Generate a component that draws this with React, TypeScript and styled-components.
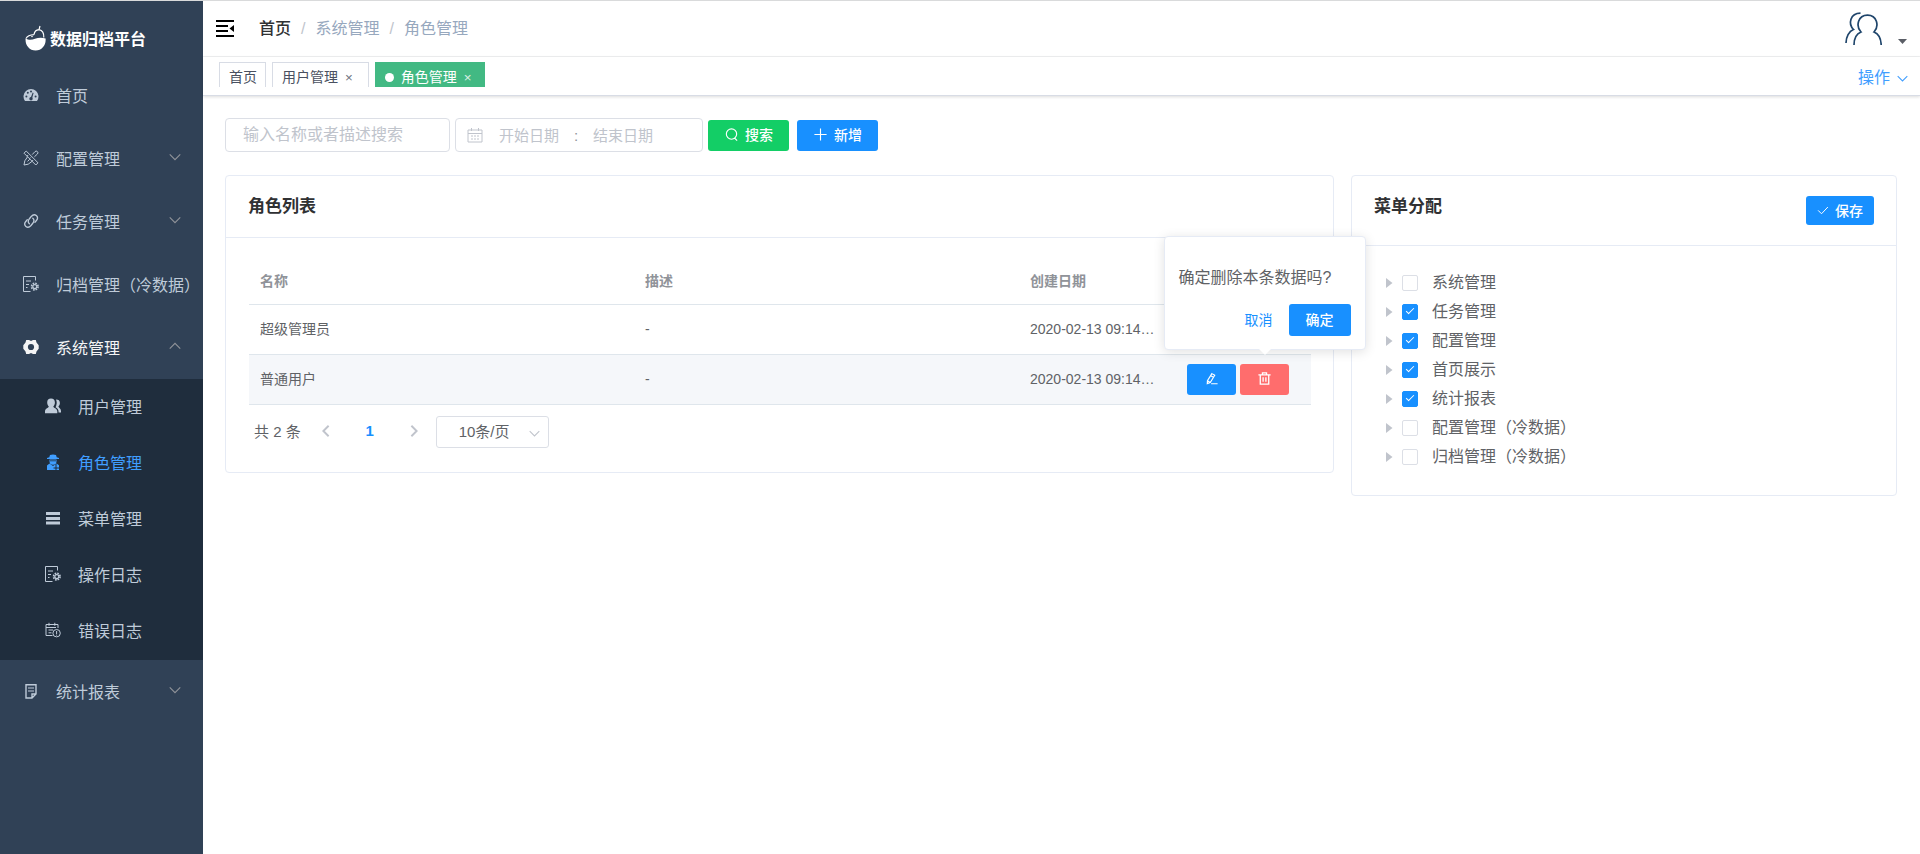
import React, { useState } from 'react';
import styled, { createGlobalStyle, css } from 'styled-components';

const GlobalStyle = createGlobalStyle`
  *, *::before, *::after { box-sizing: border-box; }
  body {
    margin: 0;
    background: #fff;
    color: #606266;
    font-family: "Liberation Sans", "Noto Sans CJK SC", sans-serif;
    font-size: 16px;
  }
  button, input, select { font-family: inherit; }
  button { cursor: pointer; }
  svg { display: block; flex: none; }
`;

/* ---------- layout ---------- */

const Page = styled.div`
  display: flex;
  min-height: 100vh;
  border-top: 1px solid #d9dadb;
`;

const Sidebar = styled.nav`
  flex: none;
  width: 203px;
  background: #304156;
`;

const Brand = styled.a`
  display: flex;
  align-items: center;
  gap: 4px;
  height: 63px;
  padding: 10px 0 0 25px;
  color: #fff;
  font-size: 16px;
  font-weight: 700;
  text-decoration: none;
`;

const MenuList = styled.ul`
  list-style: none;
  margin: 0;
  padding: 0;
`;

const SubMenu = styled(MenuList)`
  background: #1f2d3d;
  padding-bottom: 1px;
`;

const MenuLink = styled.a<{ $sub?: boolean; $tone?: 'open' | 'active' }>`
  display: flex;
  align-items: center;
  height: ${p => (p.$sub ? 56 : 63)}px;
  padding: ${p => (p.$sub ? '0 22px 2px 45px' : '0 22px 2px 23px')};
  color: ${p => (p.$tone === 'active' ? '#409eff' : p.$tone === 'open' ? '#f4f4f5' : '#bfcbd9')};
  font-size: 16px;
  white-space: nowrap;
  text-decoration: none;
`;

const MenuIcon = styled.span`
  flex: none;
  width: 33px;
`;

const MenuArrow = styled.span`
  margin-left: auto;
  padding-bottom: 2px;
  color: #909399;
`;

const Main = styled.div`
  flex: 1;
  min-width: 0;
`;

const Navbar = styled.header`
  display: flex;
  align-items: center;
  height: 56px;
  padding: 0 13px;
  border-bottom: 1px solid #f0f1f2;
`;

const IconButton = styled.button`
  display: flex;
  padding: 0;
  border: 0;
  background: none;
  color: #000;
`;

const Breadcrumb = styled.ol`
  display: flex;
  gap: 10px;
  list-style: none;
  margin: 0 auto 0 25px;
  padding: 0;
  font-size: 16px;
  line-height: 20px;
  color: #97a8be;
`;

const Crumb = styled.li`
  display: flex;
  gap: 10px;
  & + &::before {
    content: '/';
    color: #c0c4cc;
  }
`;

const HomeLink = styled.a`
  color: #303133;
  font-weight: 500;
  text-decoration: none;
`;

const UserButton = styled(IconButton)`
  align-items: flex-end;
  gap: 16px;
  color: #1f456b;
`;

const TagBar = styled.div`
  display: flex;
  align-items: flex-start;
  gap: 6px;
  height: 39px;
  padding: 5px 12px 0 16px;
  border-bottom: 1px solid #d8dce5;
  box-shadow: 0 1px 3px rgba(0, 0, 0, 0.14);
`;

const Tag = styled.div<{ $active?: boolean }>`
  display: flex;
  align-items: center;
  gap: 7px;
  height: 25px;
  padding: 4px ${p => (p.$active ? 5 : 8)}px 0 9px;
  border: 1px solid ${p => (p.$active ? '#42b983' : '#d8dce5')};
  border-bottom: 0;
  background: ${p => (p.$active ? '#42b983' : '#fff')};
  color: ${p => (p.$active ? '#fff' : '#495060')};
  font-size: 14px;
  line-height: 20px;
`;

const TagDot = styled.span`
  width: 9px;
  height: 9px;
  border-radius: 50%;
  background: #fff;
`;

const TagClose = styled.button`
  padding: 0 7px 0 0;
  border: 0;
  background: none;
  color: inherit;
  opacity: 0.8;
`;

const Operations = styled.button`
  display: flex;
  align-items: center;
  gap: 7px;
  margin-left: auto;
  padding: 6px 0 0;
  border: 0;
  background: none;
  color: #409eff;
  font-size: 16px;
  line-height: 20px;
`;

const Content = styled.main`
  padding: 22px 23px 22px 22px;
`;

/* ---------- filters ---------- */

const Filters = styled.form`
  display: flex;
  align-items: center;
  margin-bottom: 23px;
`;

const fieldBox = css`
  height: 34px;
  border: 1px solid #dcdfe6;
  border-radius: 4px;
  background: #fff;
`;

const SearchInput = styled.input`
  ${fieldBox}
  width: 225px;
  margin-right: 5px;
  padding: 0 17px;
  color: #606266;
  font-size: 16px;
  &::placeholder { color: #c0c4cc; }
`;

const DateRange = styled.div`
  ${fieldBox}
  display: flex;
  align-items: center;
  width: 248px;
  margin-right: 5px;
  padding: 0 11px;
  color: #c0c4cc;
  font-size: 15px;
`;

const DateInput = styled.input`
  width: 60px;
  padding: 0;
  border: 0;
  background: none;
  color: #606266;
  font-size: 15px;
  &::placeholder { color: #c0c4cc; }
  &:first-of-type { margin-left: 16px; }
`;

const DateSeparator = styled.span`
  width: 34px;
  color: #909399;
  text-align: center;
`;

const Button = styled.button<{ $color: string; $height?: number; $pad?: number }>`
  display: inline-flex;
  align-items: center;
  justify-content: center;
  gap: 6px;
  height: ${p => p.$height ?? 31}px;
  padding: 0 ${p => p.$pad ?? 16}px 2px;
  border: 0;
  border-radius: 3px;
  background: ${p => p.$color};
  color: #fff;
  font-size: 14px;
  font-weight: 500;
`;

const SearchButton = styled(Button)`
  margin-right: 8px;
`;

/* ---------- cards ---------- */

const Columns = styled.div`
  display: grid;
  grid-template-columns: repeat(3, minmax(0, 1fr));
  align-items: start;
  gap: 17px;
`;

const Card = styled.section<{ $span?: number }>`
  grid-column: span ${p => p.$span ?? 1};
  border: 1px solid #e6ebf5;
  border-radius: 4px;
`;

const CardHeader = styled.div`
  display: flex;
  align-items: flex-start;
  justify-content: space-between;
  padding: 20px 22px;
  border-bottom: 1px solid #e6ebf5;
`;

const CardTitle = styled.h2`
  margin: 0;
  color: #303133;
  font-size: 17px;
  line-height: 21px;
  font-weight: 700;
`;

const CardBody = styled.div`
  padding: 22px 22px 24px 23px;
`;

/* ---------- table ---------- */

const Table = styled.table`
  width: 100%;
  table-layout: fixed;
  border-collapse: separate;
  border-spacing: 0;
  font-size: 14px;
  line-height: 20px;
`;

const Col = styled.col<{ $fixed?: boolean }>`
  width: ${p => (p.$fixed ? '146px' : 'auto')};
`;

const Th = styled.th`
  height: 45px;
  padding: 0 11px 2px;
  border-bottom: 1px solid #dfe6ec;
  color: #909399;
  font-weight: 700;
  text-align: left;
`;

const Row = styled.tr<{ $hover?: boolean }>`
  background: ${p => (p.$hover ? '#f5f7fa' : '#fff')};
`;

const Td = styled.td`
  height: 50px;
  padding: 0 8px 2px 11px;
  border-bottom: 1px solid #dfe6ec;
`;

const ActionTd = styled(Td)`
  padding-bottom: 0;
`;

const DateText = styled.div`
  overflow: hidden;
  text-overflow: ellipsis;
  white-space: nowrap;
`;

const Actions = styled.div`
  display: flex;
  gap: 4px;
  margin-left: 11px;
`;

const PopAnchor = styled.div`
  position: relative;
`;

const Popconfirm = styled.div`
  position: absolute;
  z-index: 10;
  left: 50%;
  bottom: 45px;
  width: 202px;
  margin-left: -101px;
  padding: 28px 14px 13px;
  border: 1px solid #e6ebf5;
  border-radius: 4px;
  background: #fff;
  box-shadow: 0 2px 12px rgba(0, 0, 0, 0.12);
  font-size: 16px;
  &::after {
    content: '';
    position: absolute;
    left: 50%;
    bottom: -6px;
    margin-left: -6px;
    border: 6px solid transparent;
    border-top-color: #fff;
    border-bottom: 0;
  }
`;

const PopText = styled.p`
  margin: 0 0 14px;
  line-height: 25px;
  white-space: nowrap;
`;

const PopActions = styled.div`
  display: flex;
  justify-content: flex-end;
  gap: 16px;
`;

const TextButton = styled.button`
  padding: 0 0 2px;
  border: 0;
  background: none;
  color: #1890ff;
  font-size: 14px;
`;

/* ---------- pagination ---------- */

const Pagination = styled.div`
  display: flex;
  align-items: center;
  margin-top: 11px;
  padding-left: 5px;
  font-size: 15px;
  color: #606266;
`;

const Total = styled.span`
  padding: 0 3px 3px 0;
`;

const PageArrow = styled.button`
  display: flex;
  justify-content: center;
  width: 44px;
  padding: 0 0 2px;
  border: 0;
  background: none;
  color: #c0c4cc;
`;

const PageNumber = styled.button`
  width: 44px;
  padding: 0 0 3px;
  border: 0;
  background: none;
  color: #1890ff;
  font-size: 15px;
  font-weight: 700;
`;

const SelectBox = styled.div`
  position: relative;
  color: #c0c4cc;
`;

const PageSize = styled.select`
  appearance: none;
  width: 113px;
  height: 32px;
  padding: 0 0 2px 22px;
  border: 1px solid #dcdfe6;
  border-radius: 3px;
  background: #fff;
  color: #606266;
  font-size: 15px;
`;

const SelectArrow = styled.span`
  position: absolute;
  right: 9px;
  top: 12px;
  pointer-events: none;
`;

/* ---------- tree ---------- */

const Tree = styled.ul`
  list-style: none;
  margin: 0;
  padding: 0 0 0 9px;
`;

const TreeItem = styled.li`
  display: flex;
  align-items: center;
  height: 29px;
`;

const TreeCaret = styled.button`
  width: 18px;
  height: 16px;
  padding: 3px 2px;
  border: 0;
  background: none;
  color: #c0c4cc;
`;

const TreeLabel = styled.label`
  display: flex;
  align-items: center;
  gap: 14px;
  font-size: 16px;
  line-height: 20px;
`;

const Checkbox = styled.input`
  appearance: none;
  position: relative;
  width: 16px;
  height: 16px;
  margin: 0;
  border: 1px solid #dcdfe6;
  border-radius: 2px;
  background: #fff;
  &:checked {
    border-color: #1890ff;
    background: #1890ff;
  }
  &:checked::after {
    content: '';
    position: absolute;
    left: 5px;
    top: 1px;
    width: 4px;
    height: 8px;
    border: solid #fff;
    border-width: 0 1px 1px 0;
    transform: rotate(45deg);
  }
`;

/* ---------- icons ---------- */

type IconName = keyof typeof shapes;

const gear = (
  <g fill="none" stroke="currentColor">
    <circle cx="11.8" cy="10.6" r="3.3" strokeWidth="1.6" strokeDasharray="1.6 1" />
    <circle cx="11.8" cy="10.6" r="2" strokeWidth="1.2" />
  </g>
);

const shapes = {
  dashboard: (
    <>
      <path d="M2 14A7.5 7.5 0 1 1 14 14Z" fill="currentColor" />
      <g fill="#304156">
        <circle cx="3.4" cy="9.4" r="1" /><circle cx="4.8" cy="5.8" r="1" /><circle cx="8" cy="4.4" r="1" />
        <circle cx="12.6" cy="9.4" r="1" /><circle cx="8" cy="11.8" r="1.7" />
        <path d="M7.4 11.5 9.7 5.6l.9.3-1.7 6Z" />
      </g>
    </>
  ),
  tools: (
    <g fill="none" stroke="currentColor" strokeWidth="1">
      <path d="M1 3.2 3.2 1 15 12.8 12.8 15Z M4 6.2l1.2-1.2M6.5 8.7l1.2-1.2M9 11.2l1.2-1.2" />
      <path d="M9.2 4.6 12 1.6a1.6 1.6 0 0 1 2.4 2.4L11.4 6.8M6.8 9.2 4.6 11.4M4.6 6.8 1.8 10.8 1 15l4.2-.8L9 11.4" />
    </g>
  ),
  link: (
    <g fill="none" stroke="currentColor" strokeWidth="1.3" strokeLinecap="round">
      <path d="M9.800 5.200C11.300 6.500 11.200 8.300 10 10L8 12.500C6.400 14.300 4.300 14.600 2.900 13.400S1.300 10.300 2.800 8.500L4.300 6.700" />
      <path d="M6.400 10.800C4.900 9.500 5 7.700 6.200 6L8.200 3.500C9.800 1.700 11.900 1.400 13.300 2.600S14.900 5.700 13.400 7.500L11.900 9.300" />
    </g>
  ),
  archive: (
    <g>
      <path d="M7.500 15.500H.5V.5H12.500V4.500M3 5h5M3 8.500h3M3 11.500h1.500" fill="none" stroke="currentColor" />
      {gear}
    </g>
  ),
  setting: (
    <g>
      <path d="M3.200.900H6L8 2 10 .900H12.800L13.500 3.500 15.700 6.200V9.800L13.500 12.500 12.800 15.100H10L8 14 6 15.100H3.200L2.500 12.500.3 9.800V6.200L2.500 3.500Z" fill="currentColor" />
      <circle cx="8" cy="8" r="3.100" fill="#304156" />
    </g>
  ),
  users: (
    <path fill="currentColor" d="M6 .5c2.500 0 3.900 1.600 3.900 4 0 1.700-.7 3-1.600 3.900.2 1.500 4 1.700 4 5.100v1.800H0v-1.800c0-3.400 3.600-3.600 3.800-5.100C2.900 7.500 2.200 6.200 2.200 4.500 2.200 2.100 3.500.5 6 .5Zm5 1c2.600 0 3.900 1.200 3.900 3.400 0 1.500-.6 2.600-1.500 3.400.1 1.300 2.600 2.200 2.600 4.700v1.500h-2.400c0-3-.9-4-3-5.200 1.200-2.800 1.600-5.200.4-7.800Z" />
  ),
  role: (
    <g fill="currentColor">
      <path d="M5 1 8 .6l3 .4.7 2.200 2.300.8v1H2V4l2.300-.8ZM4.500 5.500h7v1.800a3.500 3.500 0 0 1-7 0Z" />
      <path d="M4.500 9.500 8 12l3.500-2.500 2.500 1.700V16H2v-4.500Z" />
      <path d="M11 10v6M8.500 14H14" stroke="#1f2d3d" strokeWidth="1" />
      <path d="M5 6.800h6" stroke="#1f2d3d" strokeWidth=".8" />
    </g>
  ),
  menu: <path d="M1 3.500h14M1 8.500h14M1 13h14" stroke="currentColor" strokeWidth="2.800" />,
  error: (
    <g fill="none" stroke="currentColor">
      <path d="M7.500 13.500H1V2.500H13V6M4 .8v3M9.800.8v3M1 5.500h10M3.500 8H8M3.500 10.800h3" />
      <circle cx="11.600" cy="11.200" r="3.700" /><path d="M11.600 9v3M11.600 12.600v1" />
    </g>
  ),
  report: (
    <g fill="none" stroke="currentColor" strokeWidth="1.400">
      <path d="M9 15H3V1.800H13V11ZM9 15v-4H13" /><path d="M5 5h6M5 8h6" strokeWidth="1.200" />
    </g>
  ),
  calendar: (
    <path d="M1 3h14v12H1ZM4.500 1v3M11.500 1v3M1 6.500h14M4 9h2M7 9h2M10 9h2M4 12h2M7 12h2M10 12h2" fill="none" stroke="currentColor" />
  ),
  search: <path d="M8 2a5.500 5.500 0 1 1 0 11A5.500 5.500 0 0 1 8 2ZM11.500 12l2.500 2.500" fill="none" stroke="currentColor" strokeWidth="1.200" />,
  plus: <path d="M8 1.500v13M1.500 8h13" stroke="currentColor" strokeWidth="1.200" />,
  check: <path d="M1.500 8.500 6 13 14.500 4" fill="none" stroke="currentColor" strokeWidth="1.300" />,
  edit: (
    <path d="M8.500 2 12 4 6.500 13 2.800 14.300 3 10.800ZM7 4.500l3.500 2M3 10.800 6.500 13M7.500 14.500H15.500" fill="none" stroke="currentColor" strokeWidth="1.400" />
  ),
  trash: (
    <path d="M.5 3.500h15M5.500 3V1h5v2M2.800 3.500V15H13.200V3.500M6.300 6.500V12M9.700 6.500V12" fill="none" stroke="currentColor" strokeWidth="1.600" />
  ),
  down: <path d="M1 4.500 8 11.500 15 4.500" fill="none" stroke="currentColor" strokeWidth="1.500" />,
  up: <path d="M1 11.500 8 4.500 15 11.500" fill="none" stroke="currentColor" strokeWidth="1.500" />,
  left: <path d="M11 2 5 8l6 6" fill="none" stroke="currentColor" strokeWidth="2.200" />,
  right: <path d="M5 2l6 6-6 6" fill="none" stroke="currentColor" strokeWidth="2.200" />,
};

const Icon = ({ name, size = 16 }: { name: IconName; size?: number }) => (
  <svg width={size} height={size} viewBox="0 0 16 16" aria-hidden="true">{shapes[name]}</svg>
);

const LogoIcon = () => (
  <svg width="21" height="26" viewBox="0 0 21 26" aria-hidden="true">
    <path d="M.6 13.500C4 15.500 7 15 10 13.800S17 12.300 20.600 13.500C21.200 20 17 25.500 10.600 25.500S0 20 .6 13.500Z" fill="#fff" />
    <path d="M1 13.500C2.500 10.600 5 9.800 9 9.600M9 9.600C9.400 6.500 11.500 4.800 14 4.600L15 1M14 4.600C17.500 5.400 19 8.500 18.800 12.500" fill="none" stroke="#fff" strokeWidth="1.200" />
    <circle cx="7" cy="11.500" r=".8" fill="#fff" />
  </svg>
);

const FoldIcon = () => (
  <svg width="18" height="17" viewBox="0 0 18 17" aria-hidden="true">
    <path d="M0 1H18M0 6H12M0 11H12M0 16H18" stroke="currentColor" strokeWidth="1.800" />
    <path d="M18 5v7L13.500 8.500Z" fill="currentColor" />
  </svg>
);

const AvatarIcon = () => (
  <svg width="37" height="34" viewBox="0 0 37 34" aria-hidden="true">
    <g fill="none" stroke="currentColor" strokeWidth="1.700">
      <path d="M9 33C9 27 11 22 16 20 10.500 14 13 3.200 22.500 3.200S34.500 14 29 20C34 22 36 27 36.200 33" />
      <path d="M1 31C1 25 4 19 8.500 17.500 3 12 5 1.200 15.500 1.200" />
    </g>
  </svg>
);

const Caret = () => (
  <svg width="9" height="7" viewBox="0 0 9 7" aria-hidden="true">
    <path d="M0 0h9L4.500 5Z" fill="#5a5e66" />
  </svg>
);

/* ---------- data ---------- */

type Entry = { label: string; icon: IconName; arrow?: 'down' | 'up'; active?: boolean; children?: Entry[] };

const menu: Entry[] = [
  { label: '首页', icon: 'dashboard' },
  { label: '配置管理', icon: 'tools', arrow: 'down' },
  { label: '任务管理', icon: 'link', arrow: 'down' },
  { label: '归档管理（冷数据）', icon: 'archive' },
  {
    label: '系统管理', icon: 'setting', arrow: 'up',
    children: [
      { label: '用户管理', icon: 'users' },
      { label: '角色管理', icon: 'role', active: true },
      { label: '菜单管理', icon: 'menu' },
      { label: '操作日志', icon: 'archive' },
      { label: '错误日志', icon: 'error' },
    ],
  },
  { label: '统计报表', icon: 'report', arrow: 'down' },
];

const roles = [
  { name: '超级管理员', desc: '-', created: '2020-02-13 09:14:25' },
  { name: '普通用户', desc: '-', created: '2020-02-13 09:14:25' },
];

const permissions: [string, boolean][] = [
  ['系统管理', false],
  ['任务管理', true],
  ['配置管理', true],
  ['首页展示', true],
  ['统计报表', true],
  ['配置管理（冷数据）', false],
  ['归档管理（冷数据）', false],
];

const MenuEntry = ({ entry, sub }: { entry: Entry; sub?: boolean }) => (
  <li>
    <MenuLink href="#" $sub={sub} $tone={entry.active ? 'active' : entry.children ? 'open' : undefined}>
      <MenuIcon><Icon name={entry.icon} /></MenuIcon>
      {entry.label}
      {entry.arrow && <MenuArrow><Icon name={entry.arrow} size={12} /></MenuArrow>}
    </MenuLink>
    {entry.children && (
      <SubMenu>
        {entry.children.map(c => <MenuEntry key={c.label} entry={c} sub />)}
      </SubMenu>
    )}
  </li>
);

export default function App() {
  const [confirming, setConfirming] = useState(true);
  const close = () => setConfirming(false);
  return (
    <>
      <GlobalStyle />
      <Page>
        <Sidebar>
          <Brand href="#"><LogoIcon />数据归档平台</Brand>
          <MenuList>
            {menu.map(e => <MenuEntry key={e.label} entry={e} />)}
          </MenuList>
        </Sidebar>
        <Main>
          <Navbar>
            <IconButton aria-label="收起菜单"><FoldIcon /></IconButton>
            <Breadcrumb>
              <Crumb><HomeLink href="#">首页</HomeLink></Crumb>
              <Crumb>系统管理</Crumb>
              <Crumb>角色管理</Crumb>
            </Breadcrumb>
            <UserButton aria-label="用户"><AvatarIcon /><Caret /></UserButton>
          </Navbar>
          <TagBar>
            <Tag>首页</Tag>
            <Tag>用户管理<TagClose aria-label="关闭用户管理">×</TagClose></Tag>
            <Tag $active><TagDot />角色管理<TagClose aria-label="关闭角色管理">×</TagClose></Tag>
            <Operations>操作<Icon name="down" size={11} /></Operations>
          </TagBar>
          <Content>
            <Filters onSubmit={e => e.preventDefault()}>
              <SearchInput aria-label="名称或描述" placeholder="输入名称或者描述搜索" />
              <DateRange>
                <Icon name="calendar" />
                <DateInput aria-label="开始日期" placeholder="开始日期" />
                <DateSeparator>:</DateSeparator>
                <DateInput aria-label="结束日期" placeholder="结束日期" />
              </DateRange>
              <SearchButton $color="#13ce66"><Icon name="search" size={15} />搜索</SearchButton>
              <Button type="button" $color="#1890ff"><Icon name="plus" size={15} />新增</Button>
            </Filters>
            <Columns>
              <Card $span={2}>
                <CardHeader><CardTitle>角色列表</CardTitle></CardHeader>
                <CardBody>
                  <Table>
                    <colgroup><Col /><Col /><Col $fixed /><Col $fixed /></colgroup>
                    <thead>
                      <tr><Th>名称</Th><Th>描述</Th><Th>创建日期</Th><Th aria-label="操作" /></tr>
                    </thead>
                    <tbody>
                      {roles.map((r, i) => (
                        <Row key={r.name} $hover={i === 1}>
                          <Td>{r.name}</Td>
                          <Td>{r.desc}</Td>
                          <Td><DateText>{r.created}</DateText></Td>
                          <ActionTd>
                            {i === 1 && (
                              <Actions>
                                <Button $color="#1890ff" $pad={18} aria-label="编辑"><Icon name="edit" size={13} /></Button>
                                <PopAnchor>
                                  <Button $color="#ff6d6d" $pad={18} aria-label="删除" onClick={() => setConfirming(true)}>
                                    <Icon name="trash" size={13} />
                                  </Button>
                                  {confirming && (
                                    <Popconfirm role="dialog" aria-label="删除确认">
                                      <PopText>确定删除本条数据吗?</PopText>
                                      <PopActions>
                                        <TextButton onClick={close}>取消</TextButton>
                                        <Button $color="#1890ff" $height={32} $pad={17} onClick={close}>确定</Button>
                                      </PopActions>
                                    </Popconfirm>
                                  )}
                                </PopAnchor>
                              </Actions>
                            )}
                          </ActionTd>
                        </Row>
                      ))}
                    </tbody>
                  </Table>
                  <Pagination>
                    <Total>共 2 条</Total>
                    <PageArrow aria-label="上一页"><Icon name="left" size={14} /></PageArrow>
                    <PageNumber>1</PageNumber>
                    <PageArrow aria-label="下一页"><Icon name="right" size={14} /></PageArrow>
                    <SelectBox>
                      <PageSize aria-label="每页条数"><option>10条/页</option></PageSize>
                      <SelectArrow><Icon name="down" size={11} /></SelectArrow>
                    </SelectBox>
                  </Pagination>
                </CardBody>
              </Card>
              <Card>
                <CardHeader>
                  <CardTitle>菜单分配</CardTitle>
                  <Button $color="#1890ff" $height={29} $pad={11}><Icon name="check" size={12} />保存</Button>
                </CardHeader>
                <CardBody>
                  <Tree>
                    {permissions.map(([label, on]) => (
                      <TreeItem key={label}>
                        <TreeCaret aria-label={`展开${label}`}>
                          <svg width="7" height="10" viewBox="0 0 7 10"><path d="M0 0 6.500 5 0 10Z" fill="currentColor" /></svg>
                        </TreeCaret>
                        <TreeLabel><Checkbox type="checkbox" defaultChecked={on} />{label}</TreeLabel>
                      </TreeItem>
                    ))}
                  </Tree>
                </CardBody>
              </Card>
            </Columns>
          </Content>
        </Main>
      </Page>
    </>
  );
}
